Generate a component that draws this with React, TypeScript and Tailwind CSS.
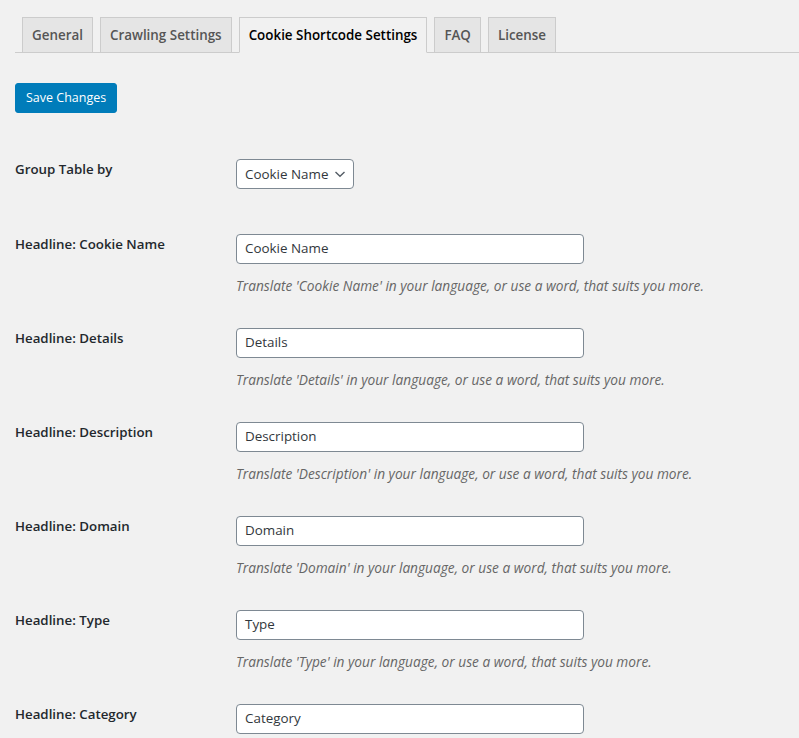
import React from 'react';

const tabs = [
    { label: 'General', active: false },
    { label: 'Crawling Settings', active: false },
    { label: 'Cookie Shortcode Settings', active: true },
    { label: 'FAQ', active: false },
    { label: 'License', active: false },
];

const headlines = ['Cookie Name', 'Details', 'Description', 'Domain', 'Type', 'Category'];

export default function App() {
    return (
        <div className="bg-[#f1f1f1] pl-[15px] text-[#23282d] font-['Open_Sans',sans-serif] overflow-hidden">
            {/* Tabs */}
            <div className="pt-[17px] flex items-end border-b border-[#ccc]">
                {tabs.map((t) => (
                    <div
                        key={t.label}
                        className={`ml-[7px] -mb-px h-[36px] pt-[1px] px-[9px] flex items-center border border-[#ccc] text-[13.4px] font-semibold whitespace-nowrap ${t.active ? 'bg-[#f1f1f1] border-b-[#f1f1f1] text-black' : 'bg-[#e5e5e5] text-[#555]'}`}
                    >
                        {t.label}
                    </div>
                ))}
            </div>

            {/* Save button */}
            <div className="pt-[30px]">
                <button className="h-[30px] px-[10px] rounded-[3px] bg-[#007cba] text-white text-[12.5px] leading-[28px] border border-[#007cba]">
                    Save Changes
                </button>
            </div>

            {/* Form table */}
            <div className="pt-[31px]">
                <div className="flex pb-[30px]">
                    <div className="w-[221px] shrink-0 pt-[16px] text-[13.3px] leading-[18px] font-semibold">Group Table by</div>
                    <div className="pt-[15px]">
                        <div className="h-[30px] w-[118px] flex items-center justify-between pl-[8px] pr-[7px] bg-white border border-[#7e8993] rounded-[4px] text-[13.4px] text-[#32373c]">
                            <span>Cookie Name</span>
                            <svg width="12" height="12" viewBox="0 0 12 12" fill="none">
                                <path d="M1.5 4 L6 8.2 L10.5 4" stroke="#555d66" strokeWidth="1.4" />
                            </svg>
                        </div>
                    </div>
                </div>

                {headlines.map((h, i) => (
                    <div key={h} className="flex h-[94px]">
                        <div className="w-[221px] shrink-0 pt-[16px] text-[13.3px] leading-[18px] font-semibold">Headline: {h}</div>
                        <div className="pt-[15px]">
                            <div className="h-[30px] w-[348px] flex items-center px-[8px] pb-[1px] bg-white border border-[#7e8993] rounded-[4px] text-[13.4px] text-[#32373c]">
                                {h}
                            </div>
                            {i < headlines.length - 1 && (
                                <p className="mt-[10px] leading-[24px] text-[13.7px] italic text-[#666]">
                                    Translate '{h}' in your language, or use a word, that suits you more.
                                </p>
                            )}
                        </div>
                    </div>
                ))}
            </div>
        </div>
    );
}
